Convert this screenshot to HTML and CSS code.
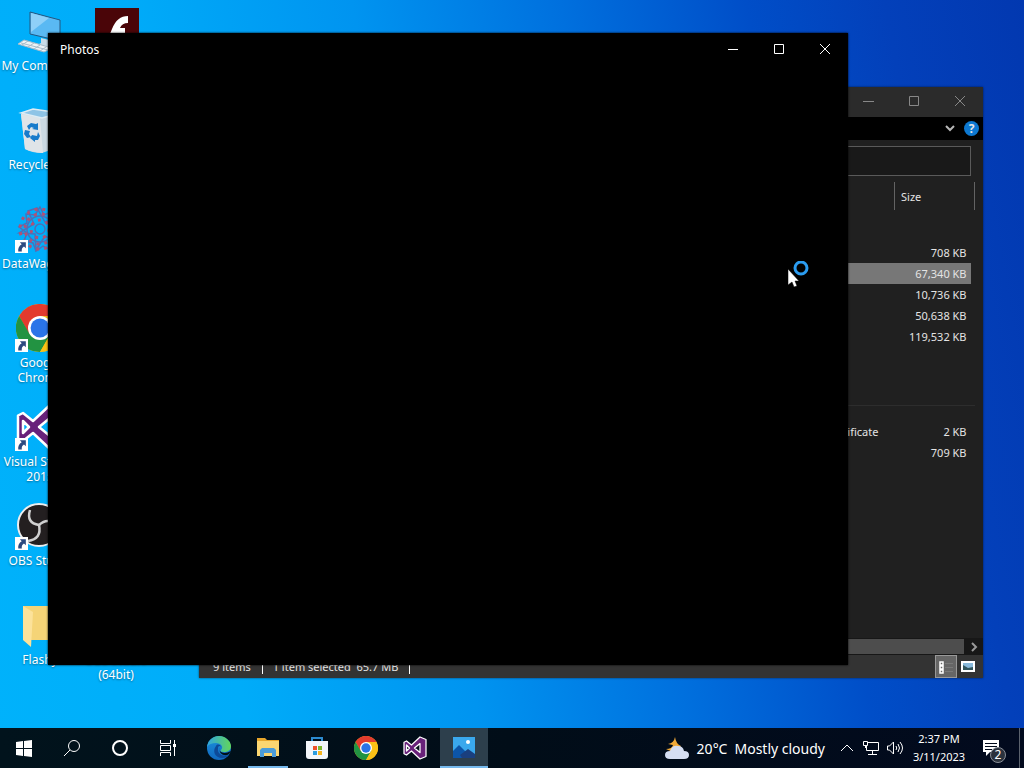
FILE: index.html
```
<!DOCTYPE html>
<html lang="en">
<head>
    <meta charset="UTF-8">
    <meta name="viewport" content="width=device-width, initial-scale=1.0">
    <title>Desktop</title>
    <link rel="stylesheet" href="styles.css">
</head>
<body>
    <!-- shared icons -->
    <svg class="defs" width="0" height="0">
        <symbol id="shortcut" viewBox="0 0 12 12">
            <path fill="#fff" d="M0 0h12v12H0z"/>
            <path fill="#2c4a80" d="M4.500 2H10v5.500L8.300 6C6.500 7.200 6 8.500 6.300 10.500H3C2.600 7.500 3.800 5.300 6.200 3.900z"/>
        </symbol>
        <symbol id="chrome" viewBox="0 0 48 48">
            <circle cx="24" cy="24" r="24" fill="#fbc116"/>
            <path fill="#e33b2e" d="M3.200 12A24 24 0 0 1 44.800 12H24L13 30z"/>
            <path fill="#229342" d="M3.200 12A24 24 0 0 0 24 48L34.400 30 24 26 13.600 30z"/>
            <path fill="#fbc116" d="M44.800 12A24 24 0 0 1 24 48L34.400 30 34 18 24 12z"/>
            <circle cx="24" cy="24" r="12" fill="#fff"/>
            <circle cx="24" cy="24" r="9.400" fill="#2a74e8"/>
        </symbol>
        <symbol id="vs" viewBox="0 0 48 48">
            <path fill="#68217a" stroke="#fff" stroke-width="2.500" stroke-linejoin="round" fill-rule="evenodd" d="M34 2l12 5v34l-12 5-17-16-10 8-5-2.500V12.500L7 10l10 8zM7 18v12l6-6zM34 15l-11 9 11 9z"/>
        </symbol>
    </svg>

    <main class="desktop">
        <div class="icons">
            <a class="icon" href="#">
                <svg viewBox="0 0 48 48">
                    <path fill="#5ab9f3" stroke="#24567f" d="M14 5l30 8v21l-30-7z"/>
                    <path fill="#8fd0f8" d="M15 6l18 5-18 14z"/>
                    <path fill="#c9dce8" d="M25 31l8 2v4l6 2-4 3-14-4 4-2z"/>
                    <path fill="#eef3f6" stroke="#a9bcc9" d="M8 33l28 8-8 4L2 37z"/>
                    <path stroke="#a9bcc9" fill="none" d="M5 36l27 7M12 34l-6 4M18 36l-6 4M24 38l-6 4M30 40l-6 4"/>
                </svg>
                <span>My&nbsp;Computer</span>
            </a>
            <a class="icon" href="#">
                <svg viewBox="0 0 48 48">
                    <path fill="#cbd9e2" d="M5 8l4 35q7 4 17 4l14-5 3-34z"/>
                    <path fill="#dfe4e8" d="M5 8l19 4 3 35q-11-1-18-4z"/>
                    <path fill="#8fc4e6" stroke="#dfecf4" stroke-width="1.500" d="M5 7l12-4 27 4-18 5z"/>
                    <g fill="#187bcb">
                        <path d="M11 20l4-3 5 1 2-1v7l-6-1 2-1-3-1-2 3z"/>
                        <path d="M9 24l5 1-1 3 2 3-4 1-3-4z"/>
                        <path d="M16 29l5 1 1-4 2 4-2 4h-3v2l-5-4z"/>
                    </g>
                </svg>
                <span>Recycle Bin</span>
            </a>
            <a class="icon" href="#">
                <svg viewBox="0 0 48 48">
                    <g fill="none" stroke="#4d70b8" stroke-width="1.500">
                        <circle cx="24" cy="24" r="5"/><circle cx="24" cy="24" r="13"/>
                        <path d="M24 2l4 8 9-4 1 10 9 3-6 7 5 8-9 2-2 9-8-4-7 5-3-8-9-2 3-8-8-6 8-4-1-9 9 1z"/>
                        <path d="M12 6l6 13-15 9 16 1 1 16 9-14 15 7-11-13 11-13-15 5-8-14z"/>
                    </g>
                    <g fill="none" stroke="#b05276" stroke-width="3" stroke-dasharray="3 5">
                        <circle cx="24" cy="24" r="20"/><circle cx="24" cy="24" r="15"/><circle cx="24" cy="24" r="9"/>
                    </g>
                </svg>
                <svg class="shortcut"><use href="#shortcut"/></svg>
                <span>DataWagon…</span>
            </a>
            <a class="icon" href="#">
                <svg><use href="#chrome"/></svg>
                <svg class="shortcut"><use href="#shortcut"/></svg>
                <span>Google Chrome</span>
            </a>
            <a class="icon" href="#">
                <svg><use href="#vs"/></svg>
                <svg class="shortcut"><use href="#shortcut"/></svg>
                <span>Visual Studio 2015</span>
            </a>
            <a class="icon" href="#">
                <svg viewBox="0 0 48 48">
                    <circle cx="23" cy="23" r="21" fill="#231f20" stroke="#eee" stroke-width="2"/>
                    <g fill="none" stroke="#d0d0d0" stroke-width="2.500">
                        <path d="M14 8q-4 13 9 15"/>
                        <path d="M23 23q3 14-11 16"/>
                        <path d="M23 23q10-9 18 2"/>
                    </g>
                </svg>
                <svg class="shortcut"><use href="#shortcut"/></svg>
                <span>OBS Studio</span>
            </a>
            <a class="icon" href="#">
                <svg viewBox="0 0 48 48">
                    <path fill="#f5d477" d="M7 5h30v34H7z"/>
                    <path fill="#fce29a" d="M7 5l10 6-2 35-8-7z"/>
                </svg>
                <span>Flashy</span>
            </a>
            <a class="icon last" href="#">
                <span>OBS Studio (64bit)</span>
            </a>
            <a class="icon flash" href="#">
                <svg viewBox="0 0 48 48">
                    <path fill="#4a0508" d="M3 1h44v44H3z"/>
                    <path fill="#fff" d="M36 9v7q-6 0-8 5h5v6h-8q-4 11-13 11v-7q5 0 8-9 5-13 16-13z"/>
                </svg>
                <span>Flash Player</span>
            </a>
        </div>

        <section class="window explorer">
            <header class="titlebar">
                <div class="controls">
                    <button aria-label="Minimize"><svg viewBox="0 0 12 12"><path d="M1 5.500h11"/></svg></button>
                    <button aria-label="Maximize"><svg viewBox="0 0 12 12"><path d="M1.500 .5h9v9h-9z"/></svg></button>
                    <button aria-label="Close"><svg viewBox="0 0 12 12"><path d="M1 0l10 10M11 0L1 10"/></svg></button>
                </div>
            </header>
            <div class="ribbon">
                <button aria-label="Expand ribbon"><svg viewBox="0 0 12 12"><path d="M2 3l4 4 4-4"/></svg></button>
                <button class="help" aria-label="Help">?</button>
            </div>
            <input class="address" type="text" aria-label="Address">
            <table class="files">
                <thead>
                    <tr><th></th><th class="type"></th><th class="size">Size</th><th class="edge"></th></tr>
                </thead>
                <tbody>
                    <tr class="group"><td colspan="4"></td></tr>
                    <tr><td></td><td></td><td>708 KB</td></tr>
                    <tr class="selected"><td></td><td></td><td>67,340 KB</td></tr>
                    <tr><td></td><td></td><td>10,736 KB</td></tr>
                    <tr><td></td><td></td><td>50,638 KB</td></tr>
                    <tr><td></td><td></td><td>119,532 KB</td></tr>
                    <tr><td></td><td></td><td></td></tr>
                    <tr><td></td><td></td><td></td></tr>
                    <tr class="group line"><td colspan="4"></td></tr>
                    <tr><td></td><td>Security Certificate</td><td>2 KB</td></tr>
                    <tr><td></td><td></td><td>709 KB</td></tr>
                </tbody>
            </table>
            <div class="scrollbar">
                <div class="thumb"></div>
                <button aria-label="Scroll right"><svg viewBox="0 0 12 12"><path d="M4 2l4 4-4 4"/></svg></button>
            </div>
            <footer class="status">
                <span>9 items</span>
                <span>1 item selected&nbsp; 65.7 MB</span>
                <div class="views">
                    <button class="active" aria-label="Details view">
                        <svg viewBox="0 0 20 20"><path fill="none" stroke="#fff" stroke-width="1.500" d="M4 5h3v3H4zM4 9h3v3H4zM4 13h3v3H4z"/><path stroke="#7a7a7a" d="M9 6.500h8M9 10.500h8M9 14.500h8"/></svg>
                    </button>
                    <button aria-label="Large icons view">
                        <svg viewBox="0 0 20 20"><path fill="#fff" d="M3 4h14v11H3z"/><path fill="#88b8da" d="M5 6h10v7H5z"/><path fill="#31545b" d="M5 8l5 3 5-1v3H5z"/></svg>
                    </button>
                </div>
            </footer>
        </section>

        <section class="window photos">
            <header class="titlebar">
                <h1>Photos</h1>
                <div class="controls">
                    <button aria-label="Minimize"><svg viewBox="0 0 12 12"><path d="M1 6.500h10"/></svg></button>
                    <button aria-label="Maximize"><svg viewBox="0 0 12 12"><path d="M1.500 1.500h9v9h-9z"/></svg></button>
                    <button aria-label="Close"><svg viewBox="0 0 12 12"><path d="M1 1l10 10M11 1L1 11"/></svg></button>
                </div>
            </header>
        </section>

        <svg class="cursor" viewBox="0 0 24 28">
            <path fill="#fff" stroke="#000" stroke-width=".5" d="M1 8v16l4-3 2 5 3-1-2-5h4z"/>
            <circle cx="14" cy="7" r="6" fill="none" stroke="#2b9cf0" stroke-width="3"/>
        </svg>
    </main>

    <nav class="taskbar">
        <div class="system">
            <button aria-label="Start"><svg viewBox="0 0 24 24"><path fill="#fff" d="M4 6l7-1v7H4zM12 5l8-1v8h-8zM4 13h7v7l-7-1zM12 13h8v8l-8-1z"/></svg></button>
            <button aria-label="Search"><svg class="line" viewBox="0 0 24 24"><circle cx="14" cy="10" r="5.500"/><path d="M10 14l-6 6"/></svg></button>
            <button aria-label="Cortana"><svg class="line" viewBox="0 0 24 24"><circle cx="12" cy="12" r="7" stroke-width="2"/></svg></button>
            <button aria-label="Task View"><svg class="line" viewBox="0 0 24 24"><path d="M4.500 4v3.500h10V4M4.500 20v-3.500h10V20M4.500 9.500h10v5h-10zM18.500 4v16"/><path fill="#fff" stroke="none" d="M17 8h3v3h-3z"/></svg></button>
        </div>
        <div class="apps">
            <button aria-label="Edge">
                <svg viewBox="0 0 24 24">
                    <defs>
                        <linearGradient id="edge-top"><stop offset="0" stop-color="#2fa5e0"/><stop offset="1" stop-color="#62d65a"/></linearGradient>
                        <linearGradient id="edge-low" x2="0" y2="1"><stop offset="0" stop-color="#1b92dc"/><stop offset="1" stop-color="#1068c0"/></linearGradient>
                    </defs>
                    <circle cx="12" cy="12" r="12" fill="url(#edge-low)"/>
                    <path fill="url(#edge-top)" d="M0 11C1 4 6 0 12 0s12 5 12 10c0 4-3 6-7 6-3 0-4-1-3-2 3-3 0-7-5-7-4 0-7 1-9 4z"/>
                    <path fill="#0d4a98" d="M9 10c-4 5-1 12 6 12 3 0 5-1 7-3-5 2-12 0-11-7 0-2 2-3 3-1-1-3-4-3-5-1z"/>
                    <path fill="#01101b" d="M13 12c-2 4 4 7 11 3l-2 3c-4 3-11 0-9-6z"/>
                </svg>
            </button>
            <button class="running" aria-label="File Explorer">
                <svg viewBox="0 0 24 24">
                    <path fill="#e8a72c" d="M1 2h8l2 2h12v4H1z"/>
                    <path fill="#fbd671" d="M1 5h22v15H1z"/>
                    <path fill="#4b9cd8" d="M6 12h12l2 2v7h-4v-4H8v4H4v-7z"/>
                </svg>
            </button>
            <button aria-label="Store">
                <svg viewBox="0 0 24 24">
                    <path fill="none" stroke="#2c8bd0" stroke-width="2" d="M7 6V2h10v4"/>
                    <path fill="#f3f6fa" d="M1 5h22v15q0 3-3 3H4q-3 0-3-3z"/>
                    <path fill="#ee5128" d="M8 10h4v4H8z"/><path fill="#7db72f" d="M13 10h4v4h-4z"/>
                    <path fill="#2b9de0" d="M8 15h4v4H8z"/><path fill="#f8b51e" d="M13 15h4v4h-4z"/>
                </svg>
            </button>
            <button aria-label="Chrome"><svg><use href="#chrome"/></svg></button>
            <button aria-label="Visual Studio"><svg><use href="#vs"/></svg></button>
            <button class="running active" aria-label="Photos">
                <svg viewBox="0 0 24 24">
                    <path fill="#3aa8ed" d="M1 1h22v21H1z"/>
                    <path fill="#0c55a8" d="M1 15l6-6 13 13H1z"/>
                    <path fill="#1a3f7e" d="M10 22l-2-3 8-6 7 5v4z"/>
                    <circle cx="16" cy="6" r="2" fill="#fff"/>
                </svg>
            </button>
        </div>
        <div class="tray">
            <button class="weather">
                <svg viewBox="0 0 26 24">
                    <path fill="#f2ab38" d="M11 1q1 7 6 9l-6 7-9-4q6 0 7-4l-5-1q6-1 7-7z"/>
                    <path fill="#d5def2" d="M6 23q-5 0-5-4t5-4q2-6 8-5 5 0 6 5 5 0 5 4t-5 4z"/>
                </svg>
                <span>20°C</span>
                <span>Mostly cloudy</span>
            </button>
            <button class="tray-icon" aria-label="Show hidden icons"><svg class="line" viewBox="0 0 18 18"><path d="M3 12l6-6 6 6"/></svg></button>
            <button class="tray-icon" aria-label="Network"><svg class="line" viewBox="0 0 18 18"><path d="M6 3.500h10.500v8H4.500V7M10.500 12v3M6 15.500h9M1.500 2.500h4v4h-4zM3.500 7v2"/></svg></button>
            <button class="tray-icon" aria-label="Volume"><svg class="line" viewBox="0 0 18 18"><path d="M1.500 7h2l4-4v12l-4-4h-2zM10 7q1.500 2 0 4M12 5q3 4 0 8M14 3q5 6 0 12"/></svg></button>
            <button class="clock">
                <span>2:37 PM</span>
                <span>3/11/2023</span>
            </button>
            <button class="notifications" aria-label="2 notifications">
                <svg viewBox="0 0 18 18"><path fill="#fff" d="M1 1h16v12H8l-4 4v-4H1z"/><path stroke="#020b1c" d="M3 4.500h12M3 7.500h12M3 10.500h7"/></svg>
                <span class="badge">2</span>
            </button>
            <button class="show-desktop" aria-label="Show desktop"></button>
        </div>
    </nav>
</body>
</html>
```
FILE: styles.css
```
* {
    box-sizing: border-box;
}

body {
    display: flex;
    flex-direction: column;
    height: 100vh;
    margin: 0;
    overflow: hidden;
    color: #ffffff;
    font-family: "Noto Sans", "Open Sans", sans-serif;
    font-size: 12px;
    line-height: 15px;
    background: linear-gradient(80deg, #00b2fb 0%, #00acf9 22%, #0094f0 42%, #0070de 60%, #004ec8 76%, #0340ba 88%, #0238b0 100%);
}

button {
    display: flex;
    align-items: center;
    justify-content: center;
    padding: 0;
    border: none;
    color: inherit;
    font: inherit;
    background: none;
}

.defs {
    position: absolute;
}

.desktop {
    position: relative;
    flex: 1;
    min-height: 0;
}

/* desktop icons */
.icons {
    display: grid;
    grid-template-rows: repeat(7, 99px);
    grid-auto-columns: 76px;
    grid-auto-flow: column;
    padding-left: 2px;
}

.icon {
    position: relative;
    display: flex;
    flex-direction: column;
    align-items: center;
    gap: 3px;
    padding-top: 7px;
    color: #ffffff;
    text-align: center;
    text-decoration: none;
    text-shadow: 0 1px 2px rgba(0, 0, 0, 0.4);
}

.icon svg {
    width: 48px;
    height: 48px;
}

.icon .shortcut {
    position: absolute;
    left: 13px;
    top: 42px;
    width: 13px;
    height: 13px;
}

.icon.flash {
    grid-area: 1 / 2;
}

.icon.last {
    grid-area: 7 / 2;
    padding-top: 58px;
}

/* windows */
.window {
    position: absolute;
    display: flex;
    flex-direction: column;
}

.titlebar {
    display: flex;
    align-items: center;
    height: 32px;
}

.titlebar h1 {
    margin: 0;
    padding-left: 12px;
    font-size: 12px;
    font-weight: normal;
}

.controls {
    display: flex;
    height: 100%;
    margin-left: auto;
}

.controls button {
    width: 46px;
}

.controls svg,
.ribbon svg,
.scrollbar svg {
    width: 12px;
    height: 12px;
    fill: none;
    stroke: currentColor;
}

.photos {
    left: 48px;
    top: 33px;
    width: 800px;
    height: 632px;
    background-color: #000000;
    box-shadow: 0 0 2px #000000;
}

.explorer {
    left: 199px;
    top: 87px;
    width: 784px;
    height: 591px;
    color: #e4e4e4;
    font-size: 11px;
    background-color: #202020;
    box-shadow: 0 0 2px rgba(0, 0, 0, 0.6);
}

.explorer .titlebar {
    height: 30px;
    color: #888888;
    background-color: #2b2b2b;
}

.ribbon {
    display: flex;
    justify-content: flex-end;
    align-items: center;
    gap: 8px;
    height: 23px;
    padding-right: 4px;
    background-color: #000000;
}

.ribbon svg {
    stroke: #b8b8b8;
    stroke-width: 2;
}

.help {
    width: 15px;
    height: 15px;
    border-radius: 50%;
    font-size: 12px;
    font-weight: bold;
    background-color: #0d78d0;
}

.address {
    height: 30px;
    margin: 6px 12px;
    border: 1px solid #5a5a5a;
    color: inherit;
    background-color: #191919;
}

.files {
    width: calc(100% - 8px);
    border-collapse: collapse;
    table-layout: fixed;
}

.files th {
    height: 28px;
    padding: 0 6px;
    border-right: 1px solid #636363;
    font-weight: normal;
    text-align: left;
}

.files .type {
    width: 122px;
}

.files .size {
    width: 76px;
    border-right: none;
}

.files .edge {
    width: 4px;
    padding: 0;
}

.files td {
    height: 21px;
    padding: 0 9px;
    white-space: nowrap;
}

.files td:nth-child(3) {
    padding-right: 4px;
    text-align: right;
}

.files .group td {
    height: 32px;
}

.files .line td {
    background: linear-gradient(#2d2d2d, #2d2d2d) 0 16px / 100% 1px no-repeat;
}

.selected td {
    background-color: #777777;
}

.scrollbar {
    display: flex;
    height: 17px;
    margin-top: auto;
    background-color: #171717;
}

.thumb {
    flex: 1;
    height: 15px;
    margin-top: 1px;
    background-color: #4d4d4d;
}

.scrollbar button {
    width: 19px;
}

.scrollbar svg {
    stroke: #999999;
    stroke-width: 2;
}

.status {
    display: flex;
    align-items: center;
    height: 23px;
    padding-left: 4px;
    background-color: #333333;
}

.status span {
    padding: 0 11px 0 10px;
    border-right: 1px solid #ffffff;
}

.views {
    display: flex;
    height: 100%;
    margin-left: auto;
    padding-right: 4px;
}

.views button {
    width: 22px;
}

.views .active {
    border: 1px solid #999999;
    background-color: #666666;
}

.views svg {
    width: 20px;
    height: 20px;
}

.cursor {
    position: absolute;
    left: 787px;
    top: 261px;
    width: 24px;
    height: 28px;
}

/* taskbar */
.taskbar {
    display: flex;
    height: 40px;
    background: linear-gradient(90deg, #01131c, #010d18 50%, #020a1e);
}

.taskbar svg {
    width: 24px;
    height: 24px;
}

.taskbar .line {
    fill: none;
    stroke: #ffffff;
}

.system,
.apps,
.tray {
    display: flex;
}

.system button {
    width: 48px;
}

.apps {
    gap: 1px;
    padding-left: 3px;
}

.apps button {
    position: relative;
    width: 48px;
}

.running::after {
    content: "";
    position: absolute;
    left: 4px;
    right: 4px;
    bottom: 0;
    height: 2px;
    background-color: #76b9ed;
}

.apps .active {
    background-color: #2d3f4c;
}

.active.running::after {
    left: 0;
    right: 0;
}

.tray {
    margin-left: auto;
}

.weather {
    gap: 7px;
    padding-right: 10px;
    font-size: 14px;
}

.taskbar .weather svg {
    width: 26px;
}

.tray-icon {
    width: 24px;
}

.taskbar .tray-icon svg {
    width: 18px;
    height: 18px;
}

.clock {
    flex-direction: column;
    width: 64px;
    font-size: 11px;
    line-height: 18px;
}

.notifications {
    position: relative;
    width: 48px;
    padding-right: 8px;
}

.taskbar .notifications svg {
    width: 18px;
    height: 18px;
}

.badge {
    position: absolute;
    left: 19px;
    top: 19px;
    width: 16px;
    height: 16px;
    border: 1px solid #8a8f98;
    border-radius: 50%;
    line-height: 14px;
    background-color: #2b323d;
}

.show-desktop {
    width: 5px;
    border-left: 1px solid #5b626d;
}
```
